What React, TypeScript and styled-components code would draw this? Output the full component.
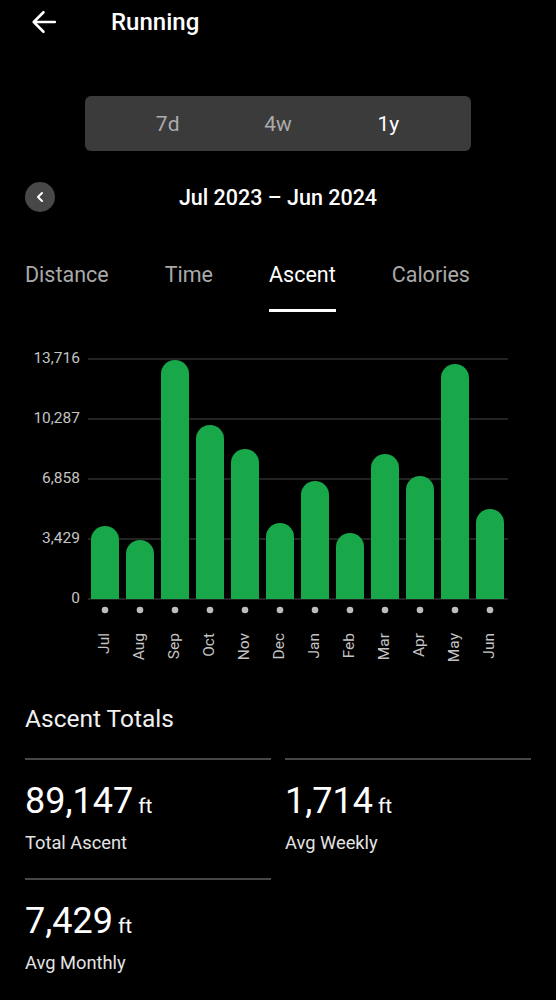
import React from 'react';
import styled, { createGlobalStyle } from 'styled-components';

const GlobalStyle = createGlobalStyle`
  html, body {
    margin: 0;
    padding: 0;
    background: #000;
  }
  body {
    font-family: Roboto, "Noto Sans", "Liberation Sans", sans-serif;
    color: #fff;
  }
`;

const Page = styled.div`
  width: 556px;
  min-height: 1000px;
  background: #000;
  overflow: hidden;
`;

const Header = styled.div`
  height: 44px;
  display: flex;
  align-items: center;
  padding-left: 30px;
`;

const BackButton = styled.div`
  width: 28px;
  height: 28px;
  display: flex;
  align-items: center;
  justify-content: center;
`;

const Title = styled.h1`
  margin: 0 0 0 53px;
  font-size: 24px;
  font-weight: 500;
  color: #fff;
`;

const Segment = styled.div`
  width: 386px;
  height: 55px;
  margin: 52px auto 0;
  box-sizing: border-box;
  padding: 0 27.5px;
  display: flex;
  align-items: center;
  background: #3b3b3b;
  border-radius: 6px;
`;

const SegmentItem = styled.div<{ $active?: boolean }>`
  flex: 1;
  text-align: center;
  font-size: 21px;
  color: ${(p) => (p.$active ? '#fff' : '#ababab')};
`;

const DateRow = styled.div`
  margin-top: 31px;
  padding: 0 25px;
  display: grid;
  grid-template-columns: 30px 1fr 30px;
  align-items: center;
`;

const RoundButton = styled.div`
  width: 30px;
  height: 30px;
  border-radius: 50%;
  background: #484848;
  display: flex;
  align-items: center;
  justify-content: center;
`;

const DateLabel = styled.div`
  text-align: center;
  font-size: 21.5px;
  font-weight: 500;
  color: #fff;
`;

const Tabs = styled.div`
  margin-top: 51px;
  padding-left: 25px;
  display: flex;
  gap: 56px;
`;

const Tab = styled.div<{ $active?: boolean }>`
  font-size: 21.5px;
  line-height: 24px;
  padding-bottom: 22px;
  border-bottom: 3px solid ${(p) => (p.$active ? '#fff' : 'transparent')};
  color: ${(p) => (p.$active ? '#fff' : '#a9a9a9')};
`;

const ChartWrap = styled.div`
  margin-top: 29px;
  height: 330px;
`;

const Totals = styled.section`
  margin-top: 35px;
  padding: 0 25px;
`;

const TotalsTitle = styled.h2`
  margin: 0;
  font-size: 24.5px;
  line-height: 26px;
  font-weight: 400;
  color: #f0f0f0;
`;

const StatGrid = styled.div`
  margin-top: 26px;
  display: grid;
  grid-template-columns: 1fr 1fr;
  column-gap: 14px;
`;

const StatCell = styled.div`
  border-top: 2px solid #474747;
  padding: 20px 0 24px;
`;

const StatValue = styled.div`
  font-size: 36px;
  line-height: 42px;
  color: #fff;
`;

const Unit = styled.span`
  font-size: 21px;
  margin-left: 5px;
`;

const StatLabel = styled.div`
  margin-top: 5px;
  font-size: 18.3px;
  line-height: 22px;
  color: #e4e4e4;
`;

const months = [
  { m: 'Jul', h: 73 },
  { m: 'Aug', h: 59 },
  { m: 'Sep', h: 239 },
  { m: 'Oct', h: 174 },
  { m: 'Nov', h: 150 },
  { m: 'Dec', h: 76 },
  { m: 'Jan', h: 118 },
  { m: 'Feb', h: 66 },
  { m: 'Mar', h: 145 },
  { m: 'Apr', h: 123 },
  { m: 'May', h: 235 },
  { m: 'Jun', h: 90 },
];

const ticks = ['13,716', '10,287', '6,858', '3,429', '0'];

const stats = [
  { value: '89,147', label: 'Total Ascent' },
  { value: '1,714', label: 'Avg Weekly' },
  { value: '7,429', label: 'Avg Monthly' },
];

const barPath = (x: number, h: number, w: number, base: number) => {
  const r = w / 2;
  const top = base - h;
  return `M${x} ${base} V${top + r} A${r} ${r} 0 0 1 ${x + w} ${top + r} V${base} Z`;
};

const Chart = () => {
  const base = 258;
  return (
    <svg width="556" height="330" viewBox="0 0 556 330">
      {ticks.map((t, i) => (
        <g key={t}>
          <line x1="88" x2="508" y1={18 + i * 60} y2={18 + i * 60} stroke="#474747" strokeWidth="1.2" />
          <text
            x="80"
            y={18 + i * 60}
            textAnchor="end"
            dominantBaseline="middle"
            fontSize="15.5"
            fill="#c4c4c4"
            fontFamily="Roboto, sans-serif"
          >
            {t}
          </text>
        </g>
      ))}
      {months.map((d, i) => {
        const x = 91 + i * 35;
        const cx = x + 14;
        return (
          <g key={d.m}>
            <path d={barPath(x, d.h, 28, base)} fill="#18a84a" />
            <circle cx={cx} cy="269" r="3.3" fill="#bdbdbd" />
            <text
              transform={`translate(${cx} 292) rotate(-90)`}
              textAnchor="end"
              dominantBaseline="middle"
              fontSize="15.5"
              fill="#c4c4c4"
              fontFamily="Roboto, sans-serif"
            >
              {d.m}
            </text>
          </g>
        );
      })}
    </svg>
  );
};

export default function App() {
  return (
    <Page>
      <GlobalStyle />
      <Header>
        <BackButton>
          <svg width="26" height="26" viewBox="0 0 24 24" fill="none" stroke="#fff" strokeWidth="2.4" strokeLinecap="round" strokeLinejoin="round">
            <path d="M22 12H2.5M11.5 3L2.5 12L11.5 21" />
          </svg>
        </BackButton>
        <Title>Running</Title>
      </Header>

      <Segment>
        <SegmentItem>7d</SegmentItem>
        <SegmentItem>4w</SegmentItem>
        <SegmentItem $active>1y</SegmentItem>
      </Segment>

      <DateRow>
        <RoundButton>
          <svg width="10" height="12" viewBox="0 0 10 12" fill="none" stroke="#fff" strokeWidth="2" strokeLinecap="round" strokeLinejoin="round">
            <path d="M7 2L3 6L7 10" />
          </svg>
        </RoundButton>
        <DateLabel>Jul 2023 – Jun 2024</DateLabel>
        <span />
      </DateRow>

      <Tabs>
        <Tab>Distance</Tab>
        <Tab>Time</Tab>
        <Tab $active>Ascent</Tab>
        <Tab>Calories</Tab>
      </Tabs>

      <ChartWrap>
        <Chart />
      </ChartWrap>

      <Totals>
        <TotalsTitle>Ascent Totals</TotalsTitle>
        <StatGrid>
          {stats.map((s) => (
            <StatCell key={s.label}>
              <StatValue>
                {s.value}
                <Unit>ft</Unit>
              </StatValue>
              <StatLabel>{s.label}</StatLabel>
            </StatCell>
          ))}
        </StatGrid>
      </Totals>
    </Page>
  );
}
